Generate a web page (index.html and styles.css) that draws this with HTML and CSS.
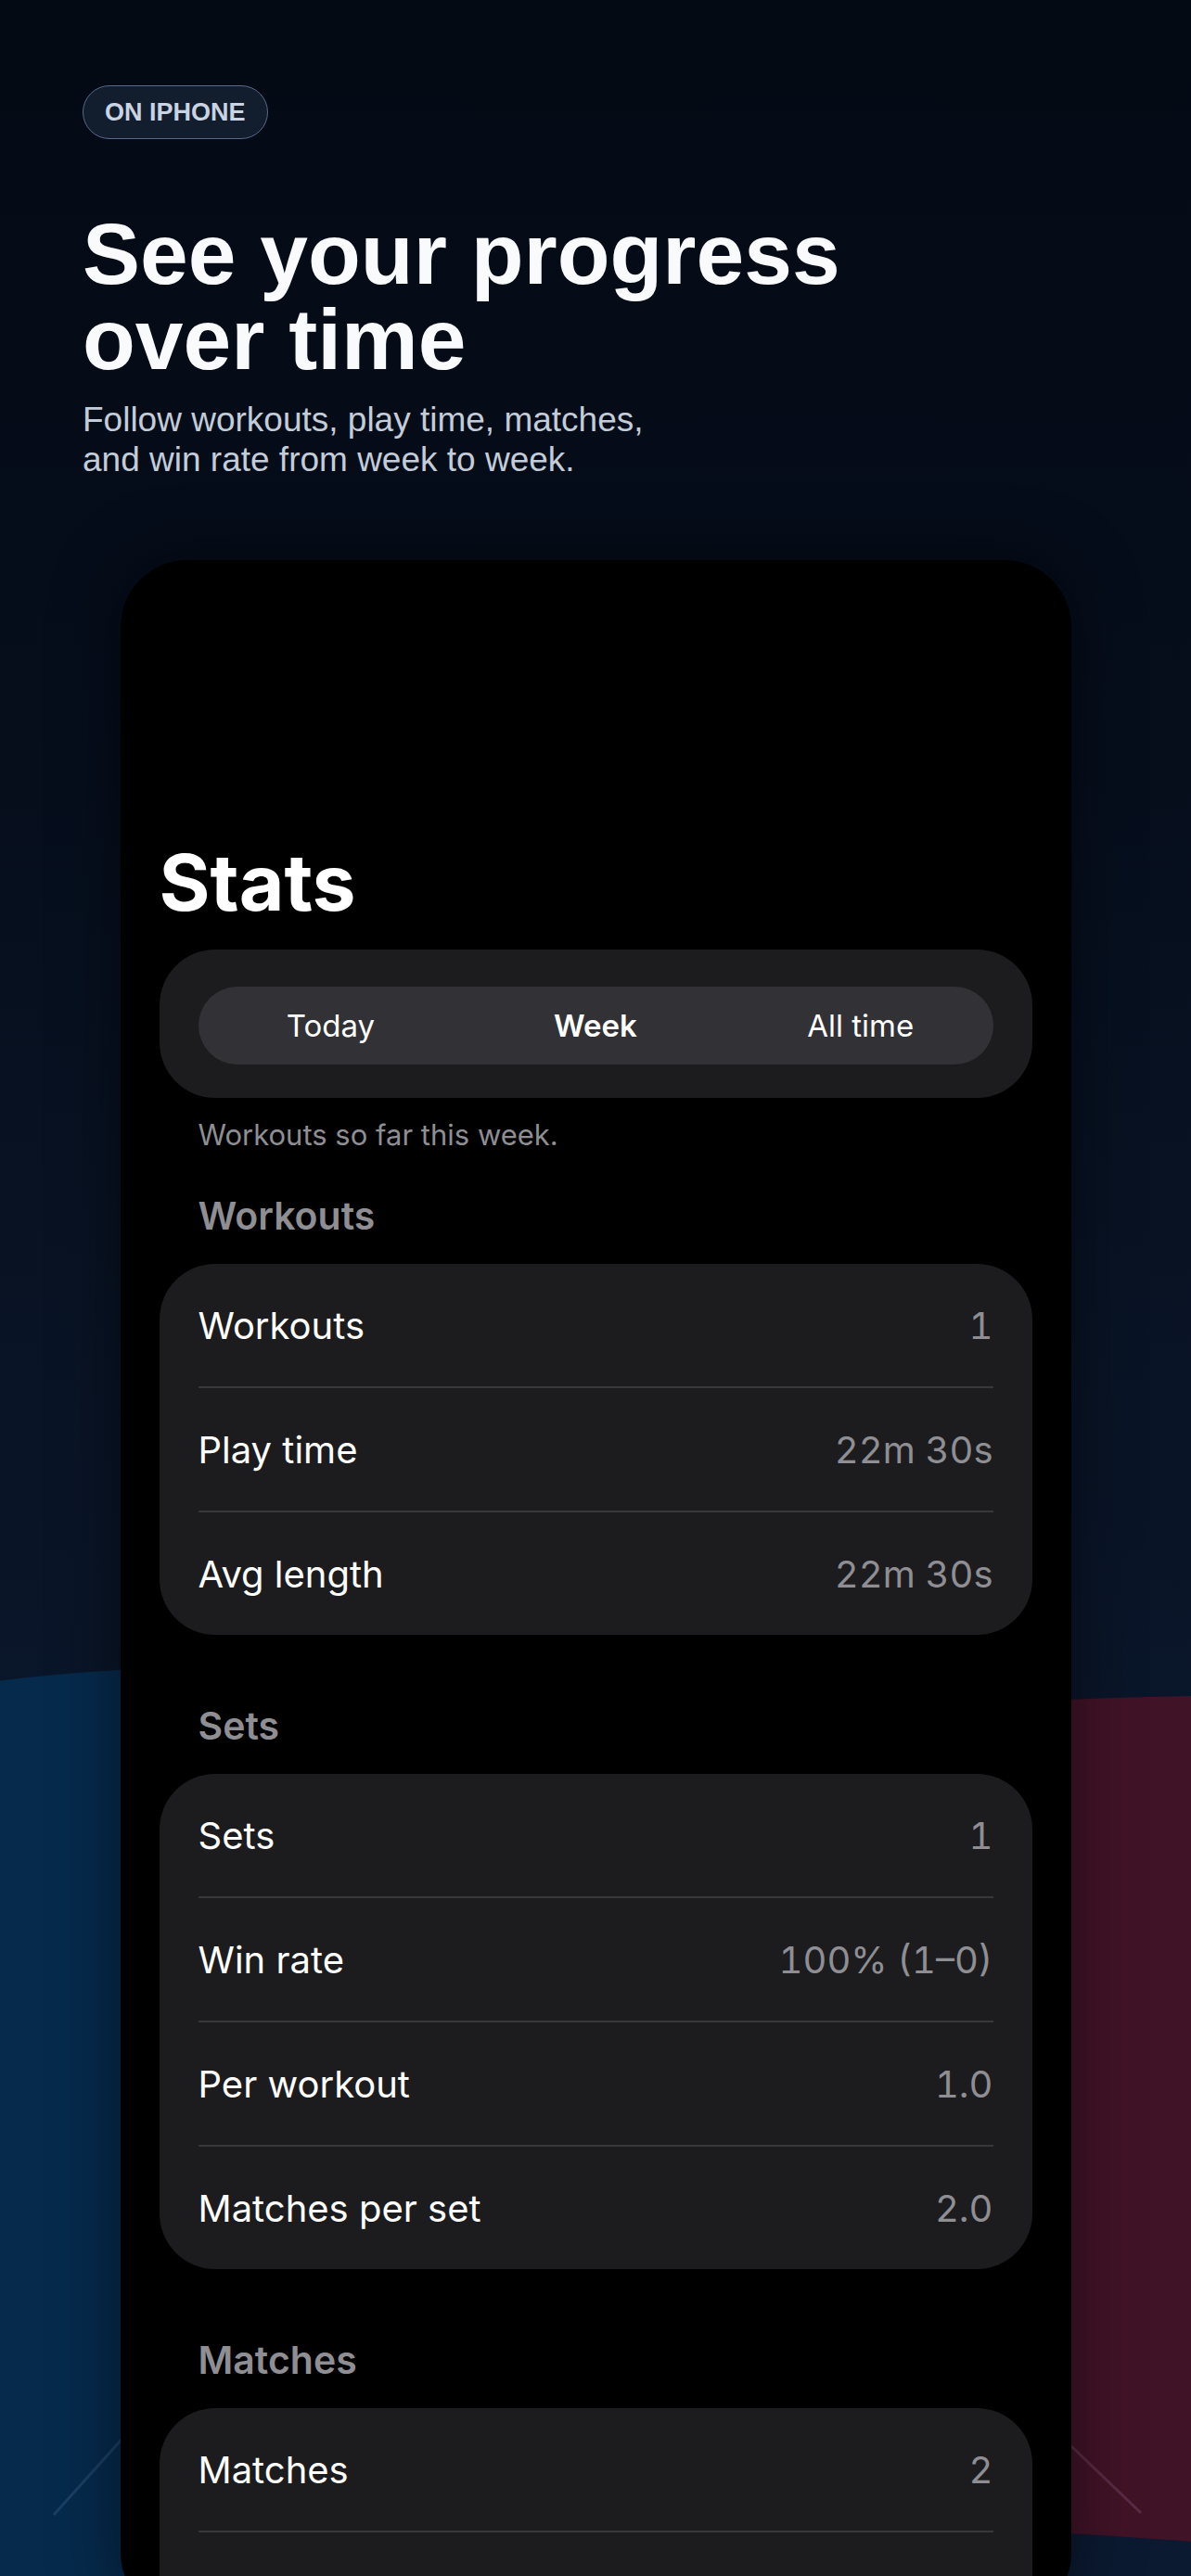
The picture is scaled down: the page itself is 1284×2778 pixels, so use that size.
FILE: index.html
```html
<!DOCTYPE html>
<html lang="en">
<head>
<meta charset="utf-8">
<title>See your progress over time</title>
<link rel="stylesheet" href="styles.css">
</head>
<body>
<div class="decor" aria-hidden="true">
  <svg class="decor-svg" width="1284" height="2778" viewBox="0 0 1284 2778">
    <path class="panel-blue" d="M -20 1815 Q 150 1792 400 1796 L 700 1800 L 700 2800 L -20 2800 Z"/>
    <path class="panel-red" d="M 1300 1829 Q 1150 1829 900 1850 L 900 2720 Q 1150 2730 1300 2742 Z"/>
    <line class="line-blue" x1="58" y1="2712" x2="220" y2="2532"/>
    <line class="line-red" x1="1230" y1="2710" x2="1060" y2="2547"/>
  </svg>
</div>
<main class="page">
  <header class="hero">
    <span class="badge">ON IPHONE</span>
    <h1 class="hero-title">See your progress over time</h1>
    <p class="hero-sub">Follow workouts, play time, matches, and win rate from week to week.</p>
  </header>

  <div class="phone">
    <h2 class="stats-title">Stats</h2>

    <div class="segmented">
      <div class="seg-track">
        <span class="seg">Today</span>
        <span class="seg seg-active">Week</span>
        <span class="seg">All time</span>
      </div>
    </div>

    <p class="caption">Workouts so far this week.</p>

    <section class="group group-first">
      <h3 class="group-title">Workouts</h3>
      <div class="card">
        <div class="row"><span class="label">Workouts</span><span class="value">1</span></div>
        <div class="row"><span class="label">Play time</span><span class="value">22m 30s</span></div>
        <div class="row"><span class="label">Avg length</span><span class="value">22m 30s</span></div>
      </div>
    </section>

    <section class="group">
      <h3 class="group-title">Sets</h3>
      <div class="card">
        <div class="row"><span class="label">Sets</span><span class="value">1</span></div>
        <div class="row"><span class="label">Win rate</span><span class="value">100% (1–0)</span></div>
        <div class="row"><span class="label">Per workout</span><span class="value">1.0</span></div>
        <div class="row"><span class="label">Matches per set</span><span class="value">2.0</span></div>
      </div>
    </section>

    <section class="group">
      <h3 class="group-title">Matches</h3>
      <div class="card">
        <div class="row"><span class="label">Matches</span><span class="value">2</span></div>
        <div class="row"></div>
      </div>
    </section>
  </div>
</main>
</body>
</html>
```

FILE: styles.css
```css
html, body {
  margin: 0;
  padding: 0;
}

body {
  position: relative;
  width: 1284px;
  height: 2778px;
  overflow: hidden;
  background: linear-gradient(180deg, #040a14 0%, #060e1c 30%, #091426 55%, #0b1a31 100%);
  font-family: "Liberation Sans", Arial, sans-serif;
}

/* decorative background layer */
.decor {
  position: absolute;
  inset: 0;
  z-index: 0;
}

.decor-svg {
  display: block;
}

.panel-blue {
  fill: #062a4c;
}

.panel-red {
  fill: #411327;
}

.line-blue {
  stroke: #1b3f63;
  stroke-width: 3;
}

.line-red {
  stroke: #5a2b45;
  stroke-width: 3;
}

.page {
  position: relative;
  z-index: 1;
  padding-top: 92px;
}

/* hero */
.hero {
  padding: 0 89px;
}

.badge {
  display: flex;
  width: fit-content;
  align-items: center;
  box-sizing: border-box;
  height: 58px;
  padding: 0 23px;
  border: 1.5px solid #56698a;
  border-radius: 29px;
  background: #121d2e;
  color: #c9d3e1;
  font-family: "Liberation Sans", Arial, sans-serif;
  font-weight: 700;
  font-size: 27px;
  line-height: 1;
}

.hero-title {
  margin: 78px 0 0;
  max-width: 960px;
  color: #f8fafc;
  font-family: "Liberation Sans", Arial, sans-serif;
  font-weight: 700;
  font-size: 93px;
  line-height: 92px;
}

.hero-sub {
  margin: 19px 0 0;
  max-width: 650px;
  color: #c3ccd9;
  font-family: "Liberation Sans", Arial, sans-serif;
  font-size: 37px;
  line-height: 43px;
}

/* phone */
.phone {
  box-sizing: border-box;
  width: 1025px;
  height: 2221px;
  margin: 87px auto 0;
  padding: 299px 42px 0;
  border-radius: 72px;
  background: #000;
  overflow: hidden;
  box-shadow: 0 0 70px rgba(0, 0, 0, 0.5);
  font-family: "Inter", "Noto Sans", sans-serif;
  color: #fff;
}

.stats-title {
  margin: 0;
  font-weight: 700;
  font-size: 84px;
  line-height: 98px;
  color: #fff;
}

.segmented {
  box-sizing: border-box;
  height: 160px;
  margin-top: 23px;
  padding: 40px 42px;
  border-radius: 60px;
  background: #1c1c1e;
}

.seg-track {
  display: grid;
  grid-template-columns: repeat(3, 1fr);
  align-items: center;
  height: 84px;
  border-radius: 42px;
  background: #323236;
}

.seg {
  text-align: center;
  font-size: 33px;
  font-weight: 400;
  color: #fff;
}

.seg-active {
  font-weight: 600;
}

.caption {
  margin: 22px 0 0;
  padding-left: 42px;
  font-size: 31px;
  line-height: 36px;
  color: #8e8e93;
}

.group {
  margin-top: 74px;
}

.group-first {
  margin-top: 45px;
}

.group-title {
  margin: 0 0 28px;
  padding-left: 42px;
  font-size: 41px;
  line-height: 48px;
  font-weight: 600;
  color: #8e8e93;
}

.card {
  padding: 0 42px;
  border-radius: 60px;
  background: #1c1c1e;
}

.row {
  display: flex;
  justify-content: space-between;
  align-items: center;
  height: 132px;
  font-size: 40px;
}

.row + .row {
  border-top: 2px solid #38383a;
}

.label {
  color: #fff;
}

.value {
  color: #8e8e93;
  font-variant-numeric: tabular-nums;
}
```
